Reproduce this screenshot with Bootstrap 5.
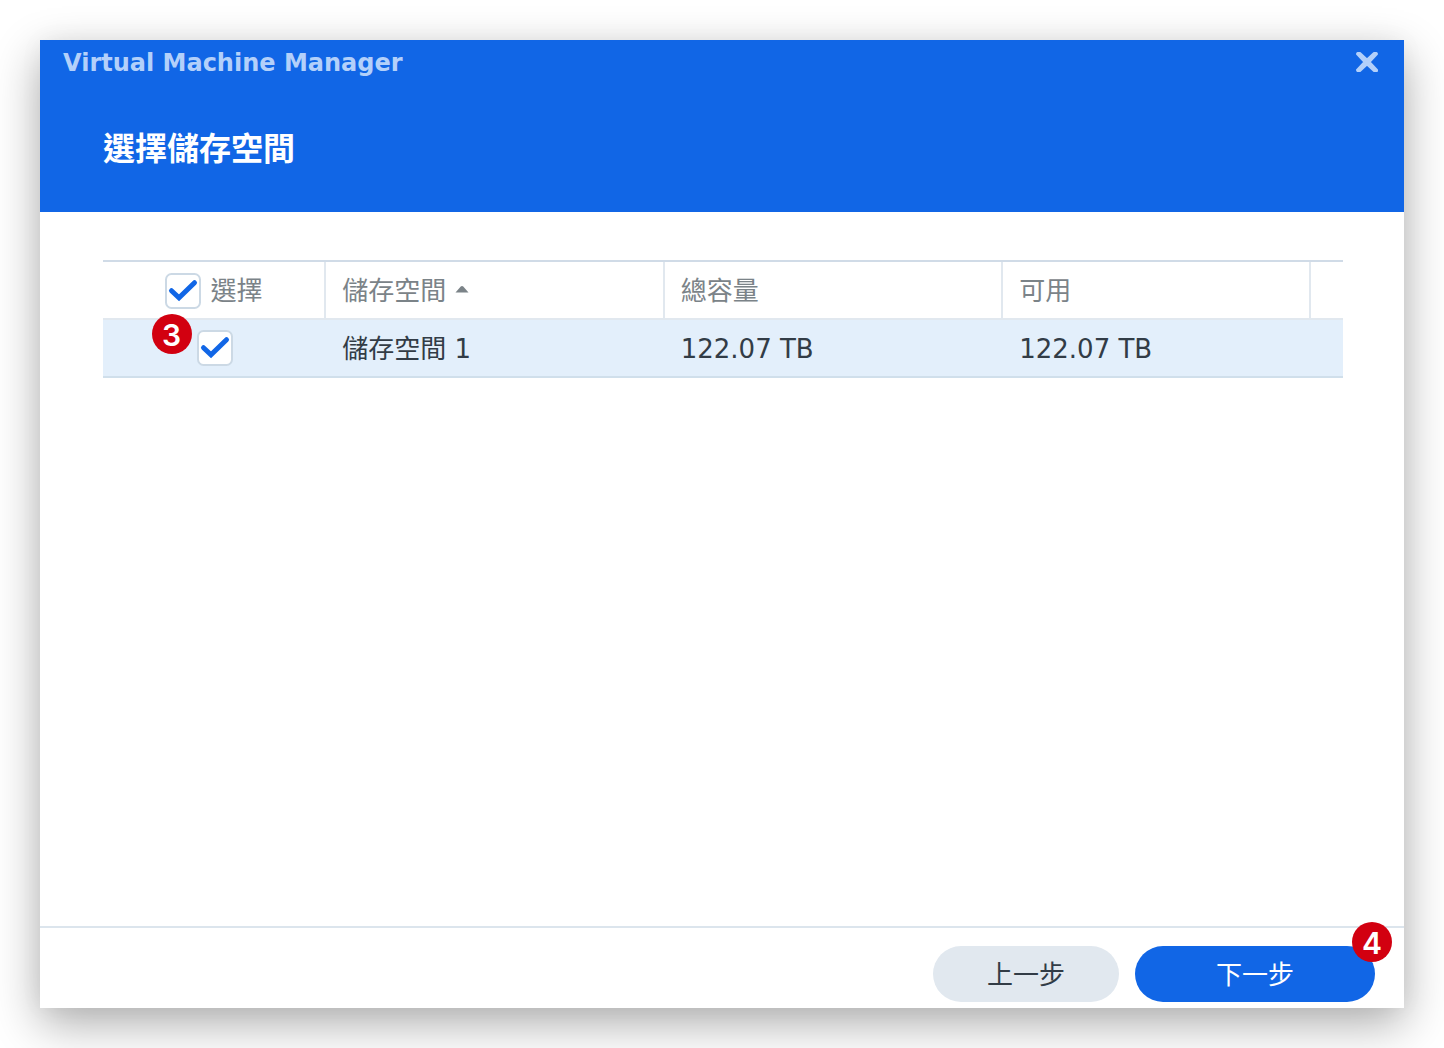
<!DOCTYPE html>
<html lang="zh-Hant">
<head>
<meta charset="utf-8">
<meta name="viewport" content="width=device-width, initial-scale=1">
<title>Virtual Machine Manager</title>
<link href="https://cdn.jsdelivr.net/npm/bootstrap@5.3.0/dist/css/bootstrap.min.css" rel="stylesheet">
<style>
  :root { --vmm-blue: #1166e6; --vmm-ink: #323c46; --vmm-line: #e1e8ef; }
  body { font-family: "DejaVu Sans", "Noto Sans CJK TC", sans-serif; font-size: 26px; line-height: 36px; color: var(--vmm-ink); background: #fff; }
  .page { padding: 40px; }
  .wizard { min-width: 0; background: #fff; box-shadow: 0 16px 44px rgba(0,0,0,.32), 0 0 24px rgba(0,0,0,.04); }
  .wizard-head { background: var(--vmm-blue); min-height: 172px; }
  .title-bar { padding: 2px 23px 0; height: 44px; }
  .app-name { font-size: 24px; font-weight: 700; color: #b3d0fa; }
  .close-btn { line-height: 0; color: #b3d0fa; }
  .step-title { font-size: 32px; line-height: 46px; font-weight: 700; color: #fff; padding: 42px 63px 0; }
  .wizard-main { padding: 48px 61px 0 63px; }
  .pools { table-layout: fixed; border-collapse: separate; border-spacing: 0; border-top: 2px solid #d0dbe7; }
  .pools th, .pools td { padding: 11px 16px 9px; border: 0; height: 58px; vertical-align: middle; white-space: nowrap; }
  .pools th { font-weight: 400; color: #7b8388; border-bottom: 2px solid var(--vmm-line); }
  .pools th:not(:last-child) { border-right: 2px solid var(--vmm-line); }
  .pools td { background: #e3effb; color: var(--vmm-ink); border-bottom: 2px solid #d0dfeb; }
  .pools td.c-pick { padding: 10px 16px; }
  .pools .c-pick { width: 18%; }
  .pools .c-wide { width: 27.3%; }
  .pools .c-free { width: 24.8%; }
  .pick { width: 36px; height: 36px; margin: 0; border: 2px solid #ccd9e5; border-radius: 7px; flex: none; }
  .pick:checked { background-color: #fff; border-color: #ccd9e5; background-size: 32px 32px;
    background-image: url("data:image/svg+xml,%3csvg xmlns='http://www.w3.org/2000/svg' viewBox='0 0 32 32'%3e%3cpath fill='none' stroke='%231166e6' stroke-width='5' stroke-linecap='round' stroke-linejoin='miter' d='M4.500 15.700L12 22.800L27.500 7.700'/%3e%3c/svg%3e"); }
  .pick-label { gap: 10px; }
  .sort-mark { width: 14px; height: 12px; margin-left: 9px; }
  .step-pin { width: 40px; height: 40px; background: #d20010; color: #fff; font: 600 30px/42px Inter, sans-serif; pointer-events: none; }
  .pin-row { right: calc(100% + 5px); top: -16px; }
  .pin-next { right: -17px; top: -24px; }
  .wizard-foot { border-top: 2px solid #dce5ed; padding: 18px 29px 6px; gap: 16px; }
  .wiz-btn { height: 56px; padding: 2px 24px 0; font-size: 26px; border: 0; }
  .btn-back { min-width: 186px; background: #e1e8ef; color: var(--vmm-ink); }
  .btn-next { min-width: 240px; background: var(--vmm-blue); color: #fff; }
</style>
</head>
<body>
<div class="page d-flex min-vh-100">
  <section class="wizard d-flex flex-column flex-grow-1" role="dialog" aria-labelledby="app-name">
    <header class="wizard-head">
      <div class="title-bar d-flex align-items-center justify-content-between">
        <span class="app-name" id="app-name">Virtual Machine Manager</span>
        <button type="button" class="close-btn btn p-0 border-0" aria-label="關閉">
          <svg width="28" height="28" viewBox="0 0 28 28" fill="currentColor" stroke="currentColor" stroke-width="2" stroke-linejoin="round"><path d="M4.500 4H7L14 10.500L21 4H23.500L24 5L16.500 13L24 21V22H21L14 15.500L7 22H4.500L4 21L11.500 13L4 5Z"/></svg>
        </button>
      </div>
      <h1 class="step-title m-0">選擇儲存空間</h1>
    </header>
    <main class="wizard-main flex-grow-1">
      <table class="pools table mb-0">
        <thead>
          <tr>
            <th class="c-pick" scope="col">
              <div class="pick-label d-flex align-items-center justify-content-center">
                <input class="pick form-check-input" type="checkbox" id="pick-all" checked>
                <label for="pick-all">選擇</label>
              </div>
            </th>
            <th class="c-wide" scope="col" aria-sort="ascending">
              <div class="d-flex align-items-center">儲存空間<svg class="sort-mark" viewBox="0 0 14 12" aria-hidden="true"><path fill="#7b8388" d="M.5 7.500L5.500 1.700Q7 .3 8.500 1.700L13.500 7.500Z"/></svg></div>
            </th>
            <th class="c-wide" scope="col">總容量</th>
            <th class="c-free" scope="col">可用</th>
            <th></th>
          </tr>
        </thead>
        <tbody>
          <tr>
            <td class="c-pick">
              <div class="d-flex justify-content-center">
                <div class="position-relative d-flex">
                  <input class="pick form-check-input" type="checkbox" aria-label="儲存空間 1" checked>
                  <span class="step-pin pin-row position-absolute rounded-circle text-center">3</span>
                </div>
              </div>
            </td>
            <td>儲存空間 1</td>
            <td>122.07 TB</td>
            <td>122.07 TB</td>
            <td></td>
          </tr>
        </tbody>
      </table>
    </main>
    <footer class="wizard-foot d-flex justify-content-end">
      <button type="button" class="wiz-btn btn-back btn rounded-pill">上一步</button>
      <div class="position-relative">
        <button type="button" class="wiz-btn btn-next btn rounded-pill">下一步</button>
        <span class="step-pin pin-next position-absolute rounded-circle text-center">4</span>
      </div>
    </footer>
  </section>
</div>
<script src="https://cdn.jsdelivr.net/npm/bootstrap@5.3.0/dist/js/bootstrap.bundle.min.js"></script>
</body>
</html>
